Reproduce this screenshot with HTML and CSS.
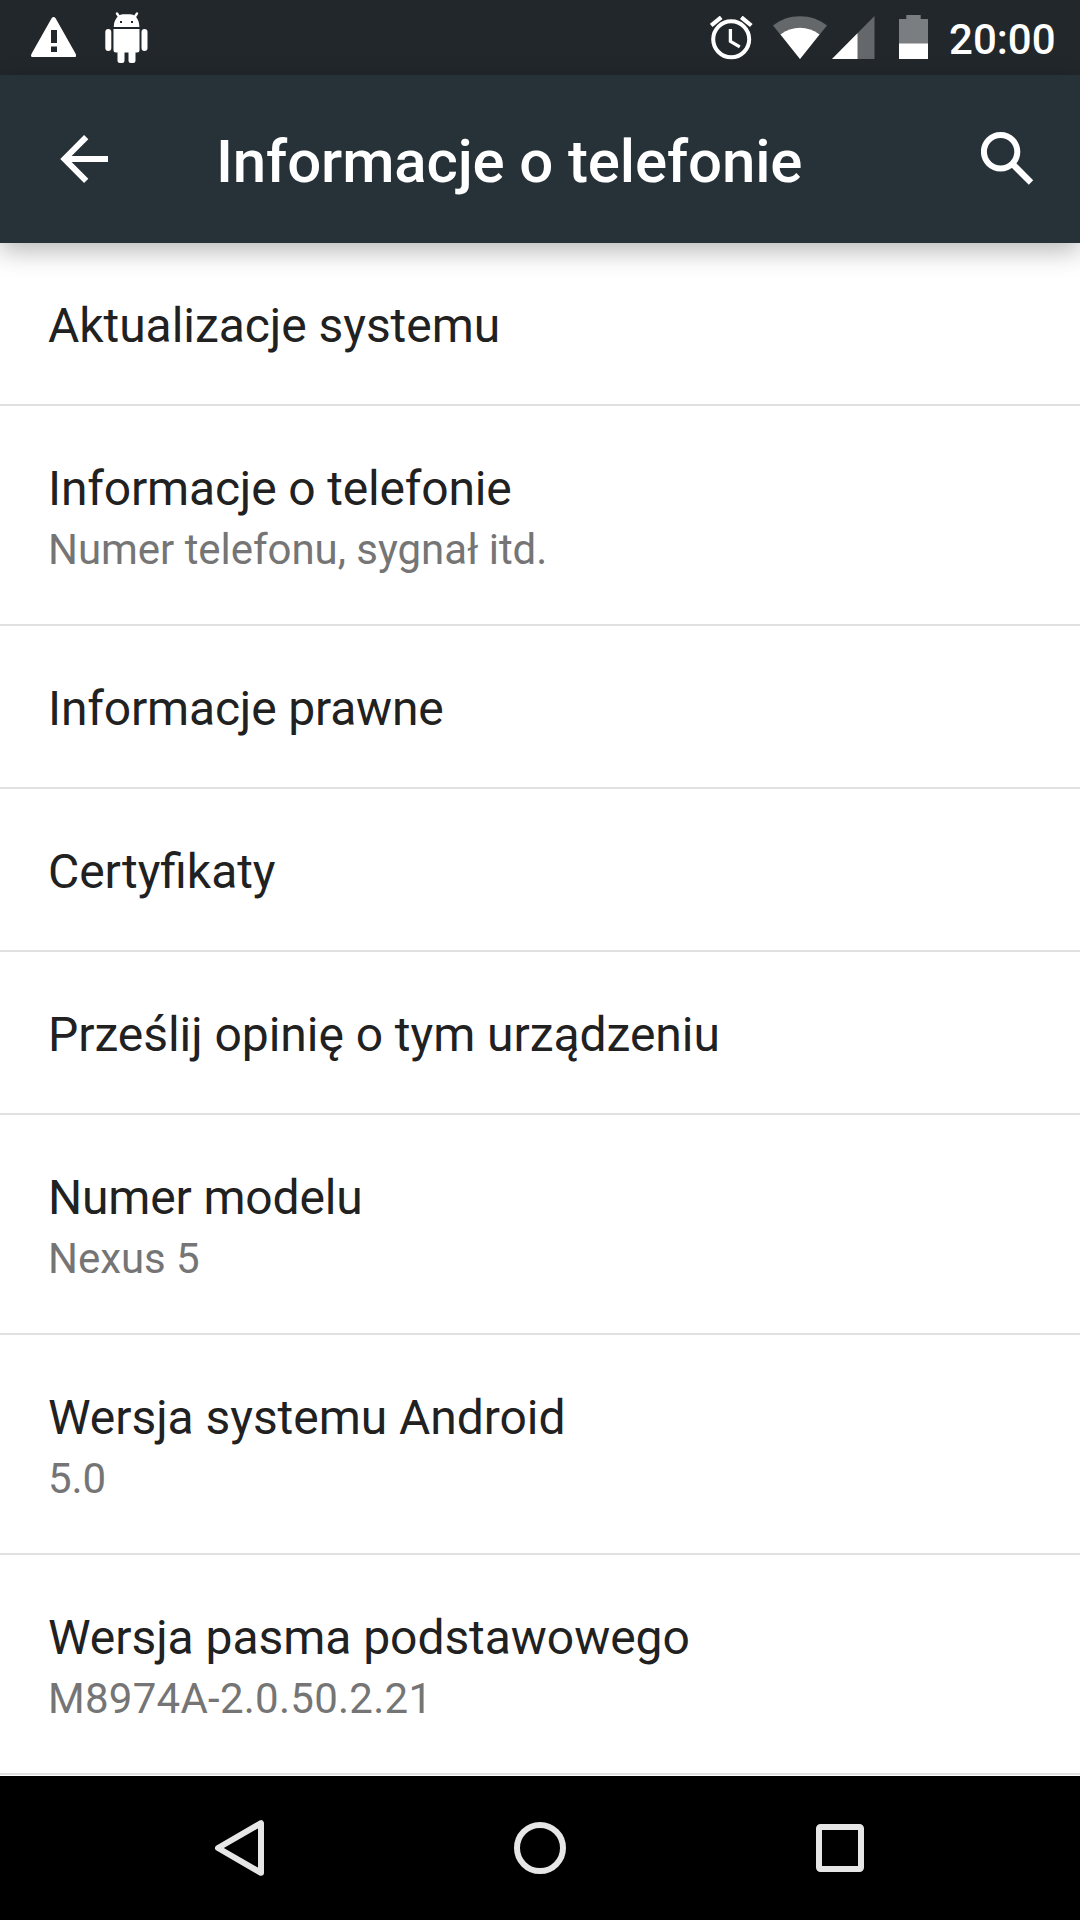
FILE: index.html
```html
<!DOCTYPE html>
<html lang="pl">
<head>
<meta charset="utf-8">
<title>Informacje o telefonie</title>
<link rel="stylesheet" href="styles.css">
</head>
<body>
<div class="status-bar">
  <div class="notifications">
    <svg class="warning" width="45" height="40" viewBox="0 0 45 40"><path fill="#fff" fill-rule="evenodd" d="M20.6 1.2Q22.6-1 24.6 1.2L44.5 36.5Q46 40 43.5 40H1.5Q-1 40 .7 36.5ZM20 13V26H26V13ZM20 29.500V35H26V29.500Z"/></svg>
    <svg class="robot" width="43" height="52" viewBox="0 0 43 52">
      <path d="M12 1.500L15 6M32 1.500L29 6" stroke="#fff" stroke-width="2.400" stroke-linecap="round"/>
      <path fill="#fff" fill-rule="evenodd" d="M8.800 15C8.800 7 14 2.300 18 2.300H25C30 2.300 34.400 7 34.400 15ZM15 9V11H17V9ZM26 9V11H28V9Z"/>
      <path fill="#fff" d="M8.500 17H34.500V38Q34.500 40.500 32 40.500H30.500V48.500Q30.500 51 28 51H26Q23.500 51 23.500 48.500V40.500H19.500V48.500Q19.500 51 17 51H15Q12.500 51 12.500 48.500V40.500H11Q8.500 40.500 8.500 38Z"/>
      <rect x="0.300" y="17" width="6" height="22" rx="3" fill="#fff"/><rect x="36.500" y="17" width="6" height="22" rx="3" fill="#fff"/>
    </svg>
  </div>
  <div class="indicators">
    <svg class="alarm" width="44" height="44" viewBox="0 0 44 44" fill="none" stroke="#fff"><circle cx="21.200" cy="23.300" r="18" stroke-width="4"/><path stroke-width="3.300" d="M20.400 13V25.300L29.800 30.800"/><path stroke-width="4.200" d="M1.200 9.500L11.200 1.300M41.300 9.500L31.300 1.300"/></svg>
    <svg class="wifi" width="54" height="44" viewBox="0 0 54 44"><path fill="#64686b" d="M0 9.500C15-3 39-3 54 9.500L27 43Z"/><path fill="#fff" d="M7.500 18.500C19 9.500 35 9.500 46.500 18.500L27 43Z"/></svg>
    <svg class="signal" width="43" height="44" viewBox="0 0 43 44"><path fill="#64686b" d="M42.500 0V43H0Z"/><path fill="#fff" d="M25.500 17.200V43H0Z"/></svg>
    <svg class="battery" width="29" height="44" viewBox="0 0 29 44"><path fill="#7b7e81" d="M7.300 0H21.700V4H29V29H0V4H7.300Z"/><path fill="#fff" d="M0 28.500H29V44H0Z"/></svg>
    <span class="clock">20:00</span>
  </div>
</div>
<header class="app-bar">
  <svg class="back" width="48" height="48" viewBox="0 0 48 48" fill="none" stroke="#fff" stroke-width="6"><path d="M26.200 2.200L4.500 24L26.200 45.800M5 24H48"/></svg>
  <h1 class="title">Informacje o telefonie</h1>
  <svg class="search" width="53" height="53" viewBox="0 0 53 53" fill="none" stroke="#fff"><circle cx="19.600" cy="19.700" r="16.700" stroke-width="6"/><path stroke-width="6.200" d="M32 32.500L50 50.500"/></svg>
</header>
<main class="list">
  <div class="row"><div class="name">Aktualizacje systemu</div></div>
  <div class="row"><div class="name tight">Informacje o telefonie</div><div class="summary">Numer telefonu, sygnał itd.</div></div>
  <div class="row"><div class="name tight">Informacje prawne</div></div>
  <div class="row"><div class="name">Certyfikaty</div></div>
  <div class="row"><div class="name">Prześlij opinię o tym urządzeniu</div></div>
  <div class="row"><div class="name tight">Numer modelu</div><div class="summary">Nexus 5</div></div>
  <div class="row"><div class="name">Wersja systemu Android</div><div class="summary">5.0</div></div>
  <div class="row"><div class="name">Wersja pasma podstawowego</div><div class="summary code">M8974A-2.0.50.2.21</div></div>
</main>
<nav class="nav-bar">
  <svg width="60" height="60" viewBox="0 0 60 60"><path d="M51 5.200V54.800L8 30Z"/></svg>
  <svg width="60" height="60" viewBox="0 0 60 60"><circle cx="30" cy="30" r="23"/></svg>
  <svg width="60" height="60" viewBox="0 0 60 60"><rect x="9" y="9" width="42" height="42" rx="1.500"/></svg>
</nav>
</body>
</html>
```
FILE: styles.css
```css
* { box-sizing: border-box; }
body {
  margin: 0;
  width: 1080px;
  height: 1920px;
  overflow: hidden;
  display: flex;
  flex-direction: column;
  background: #fff;
  font-family: Roboto, sans-serif;
  font-feature-settings: "liga" 1;
}
svg { display: block; flex: none; }
.status-bar {
  height: 75px;
  flex: none;
  display: flex;
  justify-content: space-between;
  padding: 0 24.400px 0 31px;
  background: #22272b;
}
.notifications, .indicators { display: flex; align-items: flex-start; }
.warning { margin-top: 17px; }
.robot { margin: 12px 0 0 28.500px; }
.alarm { margin-top: 16px; }
.wifi { margin: 16px 0 0 19px; }
.signal { margin: 16px 0 0 4.500px; }
.battery { margin: 15px 0 0 24.500px; }
.clock {
  margin: 15px 0 0 21px;
  color: #fff;
  font-size: 42px;
  font-weight: 500;
  line-height: 49px;
}
.app-bar {
  height: 168px;
  flex: none;
  display: flex;
  align-items: center;
  padding: 0 46px 0 60px;
  background: #273238;
  color: #fff;
  box-shadow: 0 8px 24px rgba(0, 0, 0, .28);
}
.back { margin-right: 108px; }
.search { margin-bottom: 2px; }
.title {
  flex: 1;
  margin: 6px 0 0;
  font-size: 60px;
  font-weight: 500;
  line-height: 70px;
  letter-spacing: -.14px;
}
.list { height: 1533px; flex: none; }
.row {
  padding: 55px 48px 50px;
  border-bottom: 2px solid #e0e0e0;
}
.name { font-size: 48px; line-height: 56px; color: #212121; letter-spacing: -.05px; }
.name.tight { letter-spacing: -.17px; }
.summary { margin-top: 8px; font-size: 42px; line-height: 49px; color: #757575; letter-spacing: -.04px; }
.summary.code { letter-spacing: .26px; }
.nav-bar {
  height: 144px;
  flex: none;
  display: flex;
  justify-content: center;
  align-items: center;
  gap: 240px;
  background: #000;
}
.nav-bar svg { fill: none; stroke: #e6e6e6; stroke-width: 6; stroke-linejoin: round; }
```
